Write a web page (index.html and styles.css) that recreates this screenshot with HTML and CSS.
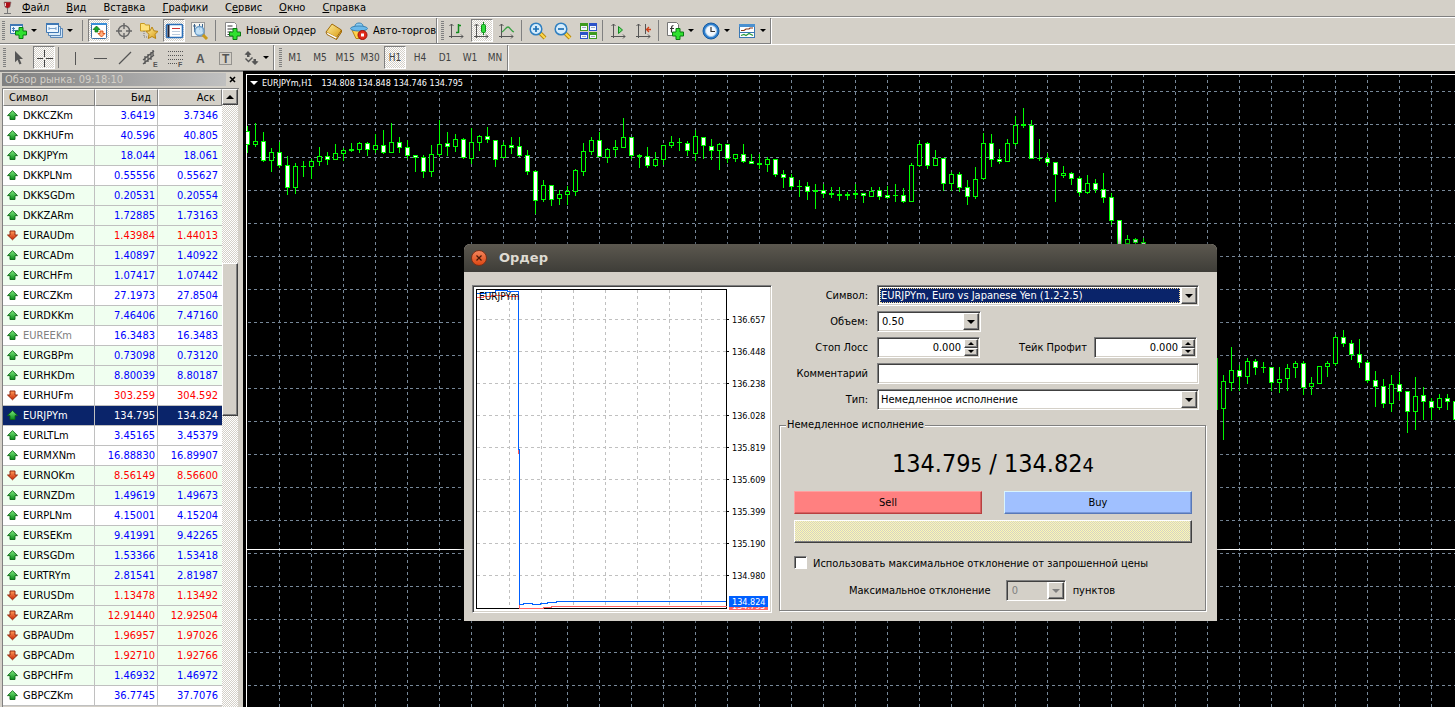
FILE: index.html
```
<!DOCTYPE html>
<html lang="ru">
<head>
<meta charset="utf-8">
<title>MetaTrader</title>
<link rel="stylesheet" href="styles.css">
</head>
<body>
<svg class="defs" aria-hidden="true">
  <defs>
    <linearGradient id="gGreen" x1="0" y1="0" x2="0" y2="1"><stop offset="0" stop-color="#7dea7d"/><stop offset="1" stop-color="#0a8a1a"/></linearGradient>
    <linearGradient id="gRed" x1="0" y1="0" x2="0" y2="1"><stop offset="0" stop-color="#ff9a5a"/><stop offset="1" stop-color="#c62a08"/></linearGradient>
    <linearGradient id="gGold" x1="0" y1="0" x2="1" y2="1"><stop offset="0" stop-color="#fff0a0"/><stop offset="1" stop-color="#d99a10"/></linearGradient>
    <symbol id="plus" viewBox="0 0 12 12"><path d="M4 .5h4V4h3.500v4H8v3.500H4V8H.5V4H4z" fill="#2fe02f" stroke="#0a7a12"/></symbol>
    <symbol id="up" viewBox="0 0 12 12"><path d="M5.500.7 10.500 5.600H8V9.500H3V5.600H.5z" fill="url(#gGreen)" stroke="#0b6a14" stroke-width=".9"/></symbol>
    <symbol id="down" viewBox="0 0 12 12"><path d="M5.500 9.800 10.500 5H8V1H3V5H.5z" fill="url(#gRed)" stroke="#8c1e06" stroke-width=".9"/></symbol>
    <symbol id="axes" viewBox="0 0 20 20"><path d="M4.500 3v14M2 15.500h14M2.500 5l2-2 2 2M14 13.500l2 2-2 2" fill="none" stroke="#555"/></symbol>
    <symbol id="lens" viewBox="0 0 20 20"><path d="M11 11l6 6" stroke="#b98a10" stroke-width="4"/><path d="M11 11l6 6" stroke="#ffd84a" stroke-width="2"/><circle cx="8" cy="8" r="5.800" fill="#d5ecfb" stroke="#2f7fc0" stroke-width="1.500"/></symbol>
  </defs>
</svg>
<div class="app">
  <nav class="menu">
    <svg class="logo" width="14" height="16" viewBox="0 0 14 16"><path d="M4 2h7l-1 5-2.500 1.500L5 7z" fill="#b01018" stroke="#777" stroke-width=".6"/><path d="M7.500 8v5M4 13.500h7" stroke="#777"/><path d="M5.500 3v3" stroke="#fff" stroke-width=".8"/></svg>
    <button><u>Ф</u>айл</button><button><u>В</u>ид</button><button>Вст<u>а</u>вка</button><button><u>Г</u>рафики</button><button>С<u>е</u>рвис</button><button><u>О</u>кно</button><button><u>С</u>правка</button>
  </nav>

  <div class="band">
    <div class="bar bar-main">
      <i class="grip"></i>
      <button class="tool wide" aria-label="Новый график"><svg width="20" height="20"><path d="M2.500 3.500h12v9h-12z" fill="#eaf5ff" stroke="#3f78b4"/><path d="M2 4h13" stroke="#3f78b4" stroke-width="2"/><path d="M5.500 6v5M4 7.500h3M4 9.500h6" stroke="#4a80b8"/><use href="#plus" x="7" y="6" width="12" height="12"/></svg><b class="arr"></b></button>
      <button class="tool wide" aria-label="Профили"><svg width="20" height="20"><path d="M6.500 7.500h12v9h-12z" fill="#cfe4f6" stroke="#5b88b8"/><path d="M4.500 5.500h12v9h-12z" fill="#dceefb" stroke="#5b88b8"/><path d="M2.500 2.500h12v9h-12z" fill="#eef7ff" stroke="#3f78b4"/><path d="M2 3h13" stroke="#3f78b4" stroke-width="2"/><path d="M5 7.500h7M5 6v3M12 6v3" stroke="#7aa3cc"/></svg><b class="arr"></b></button>
      <i class="sep"></i>
      <button class="tool on" aria-label="Обзор рынка"><svg width="20" height="20"><rect x="2.500" y="2.500" width="15" height="15" rx="1" fill="#fff" stroke="#3a6ea5"/><path d="M2 3h16" stroke="#3a8fd8" stroke-width="2"/><path d="M7.500 5l3.500 3.500H9V11H6V8.500H4z" fill="#18a828" stroke="#0b6a14" stroke-width=".7"/><path d="M12.500 16l3.500-3.500h-2V10h-3v2.500H9z" fill="#ffb080" stroke="#d8480a" stroke-width=".9"/></svg></button>
      <button class="tool" aria-label="Окно данных"><svg width="20" height="20"><circle cx="10" cy="10" r="5.500" fill="none" stroke="#666" stroke-width="1.400"/><path d="M10 2v6M10 12v6M2 10h6M12 10h6" stroke="#666" stroke-width="1.400"/></svg></button>
      <button class="tool" aria-label="Навигатор"><svg width="20" height="20"><path d="M1.500 2.500h4l1 1.500h4v6h-9z" fill="#ffe27a" stroke="#c69a22"/><path d="M5 10v6h4" stroke="#777" fill="none" stroke-dasharray="1 1"/><path d="M13 6l1.900 3.800 4.100.6-3 2.900.7 4.200-3.700-2-3.700 2 .7-4.200-3-2.900 4.100-.6z" fill="url(#gGold)" stroke="#b98512"/></svg></button>
      <button class="tool on" aria-label="Терминал"><svg width="20" height="20"><rect x="2.500" y="3.500" width="16" height="13" rx="1" fill="#fff" stroke="#2a6fb8" stroke-width="1.600"/><path d="M4.500 4v12" stroke="#223" stroke-width="2"/><path d="M8 7.500h8" stroke="#c33"/><path d="M8 10.500h8M8 13.500h8" stroke="#bcd"/></svg></button>
      <button class="tool" aria-label="Тестер стратегий"><svg width="20" height="20"><rect x="2.500" y="1.500" width="13" height="14" fill="#f4f4f0" stroke="#999"/><path d="M5.500 3v8M4 5h3M10.500 3v6M13.500 3v8" stroke="#3d648c"/><path d="M13 13l5 5" stroke="#c9991a" stroke-width="3"/><circle cx="10.500" cy="10" r="4.500" fill="#b9dcf6" fill-opacity=".85" stroke="#6a9cc8" stroke-width="1.300"/></svg></button>
      <i class="sep"></i>
      <button class="tool text"><svg width="20" height="20"><path d="M3.500 1.500h9l2 2v12h-11z" fill="#fff" stroke="#888"/><path d="M5.500 5h5M5.500 8h7M5.500 11h4M5.500 13.500h3" stroke="#333"/><use href="#plus" x="7" y="7" width="12" height="12"/></svg>Новый Ордер</button>
      <button class="tool" aria-label="MetaEditor"><svg width="20" height="20"><path d="M8 3l9.500 6-5 7.500L2 11z" fill="url(#gGold)" stroke="#a06a08"/><path d="M2 11l1 2.500 9.500 5 .5-2" fill="#fff" stroke="#a06a08"/><path d="M12.500 18.500l5-7.500V9" fill="#d08a10" stroke="#a06a08"/></svg></button>
      <button class="tool text"><svg width="20" height="20"><path d="M3 9h13l-3 8.500H7z" fill="#ffd24a" stroke="#b98512"/><path d="M6 5c0-4 8-4 8 0l.5 2.500h-9z" fill="#8ccdf2" stroke="#3b85b5"/><ellipse cx="10" cy="7.500" rx="8.500" ry="2.500" fill="#6bb9ea" stroke="#3b85b5"/><circle cx="13.500" cy="14" r="4.500" fill="#e02a18" stroke="#a01008"/><path d="M12 12.500h3v3h-3z" fill="#fff"/></svg>Авто-торговля</button>
    </div>
    <div class="bar bar-view">
      <i class="grip"></i>
      <button class="tool" aria-label="Бары"><svg width="20" height="20"><use href="#axes" width="20" height="20"/><path d="M11.500 3v9M11.500 4.500H14M9 11.500h2.500" stroke="#128a1c" stroke-width="1.500"/></svg></button>
      <button class="tool on" aria-label="Свечи"><svg width="20" height="20"><use href="#axes" width="20" height="20"/><path d="M11.500 1v13" stroke="#128a1c"/><rect x="9.500" y="3.500" width="4" height="8" rx="1" fill="#2fdd3a" stroke="#128a1c"/></svg></button>
      <button class="tool" aria-label="Линия"><svg width="20" height="20"><use href="#axes" width="20" height="20"/><path d="M5 11c3-2 4-5 6-5s3 4 6 5" fill="none" stroke="#3aa044" stroke-width="1.300"/></svg></button>
      <i class="sep"></i>
      <button class="tool" aria-label="Увеличить"><svg width="20" height="20"><use href="#lens" width="20" height="20"/><path d="M5 8h6M8 5v6" stroke="#1d6fb5" stroke-width="1.700"/></svg></button>
      <button class="tool" aria-label="Уменьшить"><svg width="20" height="20"><use href="#lens" width="20" height="20"/><path d="M5 8h6" stroke="#1d6fb5" stroke-width="1.700"/></svg></button>
      <button class="tool" aria-label="Окна"><svg width="20" height="20"><path d="M2 2h8v8H2zM11 11h8v7h-8z" fill="#3d9a1e"/><path d="M11 2h8v8h-8zM2 11h8v7H2z" fill="#2b52c8"/><path d="M3 5h6v4H3zM12 5h6v4h-6zM3 14h6v3H3zM12 14h6v3h-6z" fill="#f4f8ff"/><path d="M4 6.500h4M13 6.500h4M4 15.500h4M13 15.500h4" stroke="#9ab"/></svg></button>
      <i class="sep"></i>
      <button class="tool" aria-label="Автопрокрутка"><svg width="20" height="20"><use href="#axes" width="20" height="20"/><path d="M9.500 5.500l4 3.500-4 3.500z" fill="#6be072" stroke="#128a1c"/></svg></button>
      <button class="tool" aria-label="Сдвиг"><svg width="20" height="20"><use href="#axes" width="20" height="20"/><path d="M11.500 3v10" stroke="#555"/><path d="M17 8.500h-4M15 6l-2.500 2.500L15 11" fill="none" stroke="#d0401a" stroke-width="1.300"/></svg></button>
      <i class="sep"></i>
      <button class="tool wide" aria-label="Индикаторы"><svg width="20" height="20"><path d="M2.500 1.500h9l2 2v11h-11z" fill="#fff" stroke="#777"/><path d="M8.500 4.500c-2 0-2 1-2 7M5 7.500h4" fill="none" stroke="#333" stroke-width="1.200"/><use href="#plus" x="7" y="7" width="12" height="12"/></svg><b class="arr"></b></button>
      <button class="tool wide" aria-label="Периоды"><svg width="20" height="20"><circle cx="10" cy="10" r="8" fill="#2d7fd0" stroke="#175a9e"/><circle cx="10" cy="10" r="5.500" fill="#f2f8ff" stroke="#a8cbe8"/><path d="M10 6v4.500h4" fill="none" stroke="#333" stroke-width="1.200"/></svg><b class="arr"></b></button>
      <button class="tool wide" aria-label="Шаблоны"><svg width="20" height="20"><rect x="2.500" y="3.500" width="15" height="13" fill="#fff" stroke="#3a78b4"/><path d="M2 4.500h16" stroke="#4a90d0" stroke-width="3"/><path d="M4 9.500h3l2-1.500h3l1-1h3" fill="none" stroke="#8a3a1a" stroke-width="1.200"/><path d="M2 11.500h16" stroke="#3a78b4"/><path d="M4 14.500l3-1 2 1 3-2 4 2" fill="none" stroke="#2a9a3a" stroke-width="1.200"/></svg><b class="arr"></b></button>
    </div>
  </div>

  <div class="band">
    <div class="bar bar-draw">
      <i class="grip"></i>
      <button class="tool" aria-label="Курсор"><svg width="20" height="20"><path d="M6 3l8 8h-3.500l2 4.500-2 1-2-4.800-2.500 2.500z" fill="#555"/></svg></button>
      <button class="tool on" aria-label="Перекрестие"><svg width="20" height="20"><path d="M10.500 2v7M10.500 12v7M3 10.500h6M12 10.500h7" stroke="#444"/></svg></button>
      <i class="sep"></i>
      <button class="tool" aria-label="Вертикальная линия"><svg width="20" height="20"><path d="M10.500 4v13" stroke="#555"/></svg></button>
      <button class="tool" aria-label="Горизонтальная линия"><svg width="20" height="20"><path d="M4 10.500h13" stroke="#555"/></svg></button>
      <button class="tool" aria-label="Трендовая линия"><svg width="20" height="20"><path d="M4 16L16 4" stroke="#555" stroke-width="1.300"/></svg></button>
      <button class="tool" aria-label="Канал"><svg width="20" height="20"><path d="M3 12L14 3M3 16L14 7M5 8v8M8 6v8M11 4v8M13 2v6" stroke="#555" stroke-width="1.300"/><text x="13" y="19" class="glyph small">E</text></svg></button>
      <button class="tool" aria-label="Фибоначчи"><svg width="20" height="20"><path d="M3 3.500h15M3 7.500h15M3 11.500h15M3 15.500h9" stroke="#555" stroke-dasharray="1 1"/><text x="13" y="19" class="glyph small">F</text></svg></button>
      <button class="tool" aria-label="Текст"><svg width="20" height="20"><text x="6" y="15" class="glyph">A</text></svg></button>
      <button class="tool" aria-label="Метка"><svg width="20" height="20"><rect x="4.500" y="4.500" width="12" height="12" fill="none" stroke="#555" stroke-dasharray="1 1"/><text x="7" y="15" class="glyph">T</text></svg></button>
      <button class="tool wide" aria-label="Стрелки"><svg width="20" height="20"><path d="M8 3l3.500 3.500-2 .5v2H7V7l-2.500-.5zM15 17l-3.500-3.500 2-.5v-2H16v2l2.500.5zM6 10l2.500 2.500L12 9l1 1-4.500 4.500L5 11z" fill="#555"/></svg><b class="arr"></b></button>
    </div>
    <div class="bar bar-frames">
      <i class="grip"></i>
      <button class="tool tf">M1</button><button class="tool tf">M5</button><button class="tool tf">M15</button><button class="tool tf">M30</button><button class="tool tf on">H1</button><button class="tool tf">H4</button><button class="tool tf">D1</button><button class="tool tf">W1</button><button class="tool tf">MN</button>
    </div>
  </div>

  <main class="work">
    <aside class="watch">
      <header class="watch-title"><span>Обзор рынка: 09:18:10</span><button aria-label="Закрыть"><svg width="7" height="7"><path d="M1 1l5 5M6 1L1 6" stroke="#000" stroke-width="1.600"/></svg></button></header>
      <div class="watch-body">
        <table class="quotes">
          <colgroup><col class="c-sym"><col class="c-bid"><col></colgroup>
          <thead><tr><th>Символ</th><th>Бид</th><th>Аск</th></tr></thead>
          <tbody id="quotes"></tbody>
        </table>
        <div class="scroll"><button class="scroll-up" aria-label="Вверх"><b class="tri-up"></b></button><div class="thumb"></div></div>
      </div>
    </aside>

    <section class="chart">
      <svg id="chart" width="100%" height="100%" shape-rendering="crispEdges"></svg>
      <p class="chart-label"><b class="arr big"></b><span>EURJPYm,H1</span><span>134.808 134.848 134.746 134.795</span></p>
    </section>
  </main>
</div>

<div class="dialog" role="dialog" aria-labelledby="dlg">
  <header class="dialog-title"><button class="close" aria-label="Закрыть"><svg width="8" height="8"><path d="M1.500 1.500l5 5M6.500 1.500l-5 5" stroke="#4a1808" stroke-width="1.200"/></svg></button><h1 id="dlg">Ордер</h1></header>
  <form class="dialog-body">
    <svg class="ticks sunken" width="300" height="328" shape-rendering="crispEdges" id="ticks"></svg>
    <div class="side">
      <div class="fields">
        <label for="sym">Символ:</label>
        <span class="combo sunken sel"><select id="sym"><option>EURJPYm, Euro vs Japanese Yen (1.2-2.5)</option></select><span class="drop"><b class="arr big"></b></span></span>
        <label for="vol">Объем:</label>
        <span class="combo sunken short"><select id="vol"><option>0.50</option></select><span class="drop"><b class="arr big"></b></span></span>
        <label for="sl">Стоп Лосс</label>
        <div class="pair">
          <span class="spin sunken"><input id="sl" value="0.000"><span class="steps"><button type="button" aria-label="Больше"><b class="tri-up"></b></button><button type="button" aria-label="Меньше"><b class="arr"></b></button></span></span>
          <label for="tp">Тейк Профит</label>
          <span class="spin sunken"><input id="tp" value="0.000"><span class="steps"><button type="button" aria-label="Больше"><b class="tri-up"></b></button><button type="button" aria-label="Меньше"><b class="arr"></b></button></span></span>
        </div>
        <label for="com">Комментарий</label>
        <input id="com" class="line sunken">
        <label for="typ">Тип:</label>
        <span class="combo sunken"><select id="typ"><option>Немедленное исполнение</option></select><span class="drop"><b class="arr big"></b></span></span>
      </div>
      <fieldset class="group">
        <legend>Немедленное исполнение</legend>
        <p class="price">134.79<small>5</small> / 134.82<small>4</small></p>
        <div class="deal"><button type="button" class="sell">Sell</button><button type="button" class="buy">Buy</button></div>
        <button type="button" class="wait" aria-label="Статус"></button>
        <label class="check"><input type="checkbox"><span>Использовать максимальное отклонение от запрошенной цены</span></label>
        <div class="dev"><label for="dev">Максимальное отклонение</label><span class="combo sunken off"><select id="dev" disabled><option>0</option></select><span class="drop"><b class="arr big"></b></span></span><span>пунктов</span></div>
      </fieldset>
    </div>
  </form>
</div>
<script src="app.js"></script>
</body>
</html>
```
FILE: styles.css
```
* { box-sizing: border-box; }
html, body { height: 100%; }
body { margin: 0; overflow: hidden; background: #d4d0c8; color: #000; font: 11px/14px "DejaVu Sans Condensed", "DejaVu Sans", sans-serif; }
button, input, select { font: inherit; color: inherit; margin: 0; padding: 0; border: 0; background: none; border-radius: 0; }
h1, p { margin: 0; }
.defs { position: absolute; width: 0; height: 0; }
.app { display: flex; flex-direction: column; height: 100%; }

.menu { display: flex; align-items: center; height: 17px; border-bottom: 1px solid #808080; background: #d4d0c8; }
.menu button { padding: 0 9px 0 8px; white-space: nowrap; }
.menu u { text-underline-offset: 1px; }

.band { display: flex; height: 27px; border-top: 1px solid #fff; }
.bar { display: flex; align-items: center; height: 26px; border-right: 1px solid #808080; border-bottom: 1px solid #808080; box-shadow: 1px 1px 0 #fff; }
.bar-main { width: 437px; overflow: hidden; }
.bar-draw { width: 274px; padding-left: 1px; }
.bar-view { padding-left: 2px; }
.bar-frames { padding-left: 3px; }
.grip { flex: none; width: 3px; height: 20px; margin-left: 2px; background: repeating-linear-gradient(#808080 0 1px, #d4d0c8 1px 2px); }
.sep { flex: none; width: 1px; height: 21px; margin: 0 3px 0 2px; background: #808080; }
.bar-main .sep { margin-left: 4px; }
.bar-main .wide + .sep { margin-left: 5px; }
.tool { flex: none; display: flex; align-items: center; justify-content: center; width: 22px; height: 23px; margin: 0 1px 0 2px; border: 1px solid transparent; }
.tool svg { flex: none; }
.tool.wide { justify-content: flex-start; width: 33px; gap: 3px; }
.tool.text { width: auto; gap: 4px; padding-right: 3px; white-space: nowrap; }
.tool.on { border-color: #808080 #fff #fff #808080; background: repeating-conic-gradient(#fff 0 25%, #d4d0c8 0 50%) 0 0 / 2px 2px; }
.tool.tf { color: #404040; font: 10px/14px "DejaVu Sans Condensed", "DejaVu Sans", sans-serif; }
.glyph { font: bold 12px "Liberation Sans", sans-serif; fill: #555; }
.glyph.small { font-size: 7px; }
.arr { flex: none; width: 0; height: 0; border: 3px solid transparent; border-top-color: #000; border-bottom: 0; }
.arr.big { border-width: 4px 4px 0; }
.tri-up { width: 0; height: 0; border: 3px solid transparent; border-bottom-color: #000; border-top: 0; }

.work { flex: 1; display: flex; min-height: 0; }
.watch { flex: none; display: flex; flex-direction: column; width: 243px; padding: 0 4px 0 2px; border-top: 1px solid #808080; }
.watch-title { display: flex; align-items: center; height: 14px; margin-bottom: 2px; }
.watch-title span { flex: 1; height: 13px; padding-left: 3px; line-height: 13px; color: #d4d0c8; background: linear-gradient(90deg, #808080, #c0c0c0); }
.watch-title button { width: 13px; height: 13px; display: flex; align-items: center; justify-content: center; }
.watch-body { flex: 1; display: flex; min-height: 0; overflow: hidden; border-left: 1px solid #808080; border-top: 1px solid #808080; }
.quotes { width: 219px; height: max-content; table-layout: fixed; border-collapse: separate; border-spacing: 0; background: #fff; }
.c-sym { width: 92px; }
.c-bid { width: 63px; }
.quotes th { height: 17px; padding: 0 6px; font-weight: normal; text-align: right; background: #d4d0c8; border: 1px solid; border-color: #fff #808080 #808080 #fff; }
.quotes th:first-child { padding-left: 5px; text-align: left; }
.quotes td { height: 20px; padding: 0 2px; text-align: right; color: #00f; border-right: 1px solid #c0c0c0; border-bottom: 1px solid #c0c0c0; }
.quotes td:last-child { padding-right: 4px; border-right: 0; }
.quotes .sym { display: flex; align-items: center; gap: 4px; padding-left: 4px; color: #000; }
.quotes .green td { background: #f0fff0; }
.quotes .fall td + td { color: #f00; }
.quotes .dim .sym { color: #808080; }
.quotes tr.cur td, .quotes tr.cur .sym { background: #0a246a; color: #fff; }
.scroll { width: 16px; background: repeating-conic-gradient(#fff 0 25%, #d4d0c8 0 50%) 0 0 / 2px 2px; }
.scroll-up, .thumb, .drop, .steps button { border: 1px solid; border-color: #fff #404040 #404040 #fff; background: #d4d0c8; box-shadow: inset -1px -1px 0 #808080; }
.scroll-up { display: flex; align-items: center; justify-content: center; width: 16px; height: 16px; }
.scroll-up .tri-up { border-width: 0 4px 4px; }
.thumb { height: 153px; margin-top: 158px; }

.chart { flex: 1; position: relative; min-width: 0; overflow: hidden; background: #000; border: 2px solid #000; border-width: 3px 0 0 3px; }
.chart svg { display: block; }
.chart-label { position: absolute; left: 4px; top: 2px; display: flex; align-items: center; gap: 4px; color: #fff; font-size: 9px; white-space: nowrap; }
.chart-label .arr { border-top-color: #fff; }
.chart-label span { background: #000; }
.chart-label span + span { margin-left: 5px; }

.dialog { position: absolute; left: 464px; top: 244px; width: 753px; background: #d4d0c8; border-radius: 6px 6px 0 0; box-shadow: 0 0 10px rgba(0, 0, 0, .6); }
.dialog-title { display: flex; align-items: center; gap: 12px; height: 28px; padding-left: 7px; border-radius: 6px 6px 0 0; background: linear-gradient(#5c584f, #3e3d38); }
.dialog-title h1 { color: #dfdbd2; font: bold 13px/20px "DejaVu Sans", sans-serif; }
.close { display: flex; align-items: center; justify-content: center; width: 16px; height: 16px; border: 1px solid #7a3018; border-radius: 50%; background: linear-gradient(#f4835a, #dd4814); }
.dialog-body { display: flex; gap: 7px; padding: 13px 11px 8px 8px; }
.sunken { border: 1px solid; border-color: #808080 #fff #fff #808080; background: #fff; box-shadow: inset 1px 1px 0 #404040, inset -1px -1px 0 #d4d0c8; }
.ticks { flex: none; display: block; padding: 1px; }
.tick { font-size: 9px; }
.tick.name { font-size: 10px; }
.tick.tag { fill: #fff; }
.side { flex: 1; min-width: 0; }
.fields { display: grid; grid-template-columns: 89px 1fr; column-gap: 9px; row-gap: 5px; padding-right: 7px; }
.fields label { text-align: right; align-self: center; white-space: nowrap; }
.combo, .spin, .line { display: flex; height: 21px; }
.combo { padding: 1px; }
.combo select { flex: 1; min-width: 0; appearance: none; padding-left: 2px; opacity: 1; }
.combo.short { width: 104px; }
.combo.short select { padding-left: 3px; }
.combo.sel select { margin: 1px; padding-left: 1px; background: #0a246a; color: #fff; outline: 1px dotted #f5db95; outline-offset: -1px; }
.drop { display: flex; align-items: center; justify-content: center; width: 16px; }
.pair { display: flex; align-items: center; }
.spin { width: 103px; padding: 1px; }
.spin input { flex: 1; min-width: 0; padding-right: 3px; text-align: right; }
.pair label { width: 107px; margin-right: 7px; }
.steps { display: flex; flex-direction: column; width: 14px; background: #d4d0c8; }
.steps button { flex: 1; display: flex; align-items: center; justify-content: center; min-height: 0; }
.line { width: 100%; padding: 0 4px; }

.group { margin: 8px 0 0; padding: 0 13px 9px 14px; border: 1px solid #808080; box-shadow: 1px 1px 0 #fff, inset 1px 1px 0 #fff; min-width: 0; }
.group legend { margin-left: -8px; padding: 0 1px; background: #d4d0c8; }
.price { padding-top: 16px; text-align: center; font-size: 25px; line-height: 32px; white-space: nowrap; }
.price small { font-size: 20px; line-height: 20px; }
.deal { display: grid; grid-template-columns: 1fr 1fr; column-gap: 22px; margin: 11px 0 6px; }
.deal button { height: 23px; border: 1px solid; }
.deal .sell { background: #ff8080; border-color: #ffa0a0 #b84040 #b84040 #ffa0a0; box-shadow: inset -1px -1px 0 #d86060; }
.deal .buy { background: #a0c0ff; border-color: #d8f4ff #5878b8 #5878b8 #d8f4ff; box-shadow: inset -1px -1px 0 #7898d8; }
.wait { display: block; width: 100%; height: 23px; border: 1px solid; border-color: #fff #404040 #404040 #fff; box-shadow: inset -1px -1px 0 #808080; background: repeating-conic-gradient(#fffbb0 0 25%, #d4d0c8 0 50%) 0 0 / 2px 2px; }
.check { display: flex; gap: 6px; margin-top: 13px; align-items: flex-start; }
.check span { padding-top: 1px; white-space: nowrap; }
.check input { appearance: none; flex: none; width: 13px; height: 13px; background: #fff; border: 1px solid; border-color: #808080 #fff #fff #808080; box-shadow: inset 1px 1px 0 #404040; }
.dev { display: flex; align-items: center; gap: 7px; margin: 9px 0 0 55px; }
.dev label { margin-right: 8px; }
.combo.off { width: 60px; background: #d4d0c8; }
.combo.off select { padding-left: 4px; color: #808080; border-right: 1px solid #fff; }
.combo.off .arr { border-top-color: #808080; }
```
FILE: app.js
```
// Market watch: symbol, bid, ask, row classes
const quotes = [
  ['DKKCZKm', '3.6419', '3.7346', ''], ['DKKHUFm', '40.596', '40.805', ''], ['DKKJPYm', '18.044', '18.061', 'green'],
  ['DKKPLNm', '0.55556', '0.55627', ''], ['DKKSGDm', '0.20531', '0.20554', 'green'], ['DKKZARm', '1.72885', '1.73163', 'green'],
  ['EURAUDm', '1.43984', '1.44013', 'green fall'], ['EURCADm', '1.40897', '1.40922', 'green'], ['EURCHFm', '1.07417', '1.07442', 'green'],
  ['EURCZKm', '27.1973', '27.8504', ''], ['EURDKKm', '7.46406', '7.47160', 'green'], ['EUREEKm', '16.3483', '16.3483', 'dim'],
  ['EURGBPm', '0.73098', '0.73120', 'green'], ['EURHKDm', '8.80039', '8.80187', 'green'], ['EURHUFm', '303.259', '304.592', 'fall'],
  ['EURJPYm', '134.795', '134.824', 'cur'], ['EURLTLm', '3.45165', '3.45379', ''], ['EURMXNm', '16.88830', '16.89907', ''],
  ['EURNOKm', '8.56149', '8.56600', 'green fall'], ['EURNZDm', '1.49619', '1.49673', 'green'], ['EURPLNm', '4.15001', '4.15204', ''],
  ['EURSEKm', '9.41991', '9.42265', 'green'], ['EURSGDm', '1.53366', '1.53418', 'green'], ['EURTRYm', '2.81541', '2.81987', 'green'],
  ['EURUSDm', '1.13478', '1.13492', 'green fall'], ['EURZARm', '12.91440', '12.92504', 'green fall'], ['GBPAUDm', '1.96957', '1.97026', 'green fall'],
  ['GBPCADm', '1.92710', '1.92766', 'green fall'], ['GBPCHFm', '1.46932', '1.46972', 'green'], ['GBPCZKm', '36.7745', '37.7076', '']
];
document.getElementById('quotes').innerHTML = quotes.map(([s, b, a, c]) =>
  `<tr class="${c}"><td class="sym"><svg width="12" height="12"><use href="#${c.includes('fall') ? 'down' : 'up'}"/></svg>${s}</td><td>${b}</td><td>${a}</td></tr>`).join('');

// Candles: high, body top, body bottom, low, 1 = bearish (filled)
const candles = [
  [26,31,44,52,1],[23,41,44,46,0],[32,41,60,61,1],[48,52,60,71,0],[42,52,65,67,1],[56,65,87,94,1],[63,66,87,93,0],[61,66,66,76,0],
  [59,61,66,78,0],[47,56,61,65,0],[52,56,59,64,1],[44,53,59,59,0],[48,50,53,60,0],[43,49,50,51,1],[42,43,49,52,0],[42,43,49,55,1],
  [34,45,49,52,0],[30,45,52,53,1],[23,42,52,52,0],[37,42,47,52,1],[40,47,55,58,1],[55,55,57,71,1],[55,57,71,77,1],[45,54,71,76,0],
  [20,44,54,56,0],[32,43,46,55,1],[34,39,46,51,0],[38,39,57,58,1],[28,42,58,63,0],[35,36,42,50,0],[27,36,39,42,1],[40,40,59,66,1],
  [42,45,57,57,0],[37,45,47,53,1],[37,46,55,56,1],[50,55,71,74,1],[70,71,100,113,1],[80,85,99,101,0],[85,85,99,105,1],[90,94,98,104,0],
  [86,91,94,104,0],[69,70,91,95,0],[43,51,71,75,0],[37,40,51,54,0],[32,40,56,56,1],[48,49,57,62,0],[40,47,49,56,0],[18,37,47,47,0],
  [37,37,55,58,1],[54,55,56,67,1],[47,56,65,67,1],[52,59,65,66,0],[45,45,59,64,0],[36,42,45,47,0],[38,42,42,50,0],[41,43,50,55,1],
  [30,36,53,60,0],[37,37,45,58,1],[39,46,50,59,1],[43,44,50,69,0],[44,44,58,62,1],[54,54,58,61,0],[44,54,61,62,1],[54,61,63,63,1],
  [54,63,64,68,1],[57,59,64,71,0],[59,59,74,76,1],[70,74,77,87,1],[74,77,86,89,1],[80,86,86,96,0],[82,86,91,99,1],[84,90,91,108,1],
  [84,90,93,97,1],[87,93,94,97,1],[87,94,95,100,1],[92,94,95,99,1],[84,93,94,98,1],[93,93,95,102,1],[87,91,96,96,0],[87,90,96,99,1],
  [86,95,97,98,1],[84,95,95,101,0],[88,95,101,102,1],[63,65,101,101,0],[41,44,65,66,0],[42,43,65,68,1],[50,58,65,65,0],[58,58,83,90,1],
  [72,74,83,90,0],[72,74,87,91,1],[80,87,96,104,1],[67,79,96,98,0],[33,43,78,79,0],[34,43,59,66,1],[49,59,61,63,1],[39,43,61,61,0],
  [16,25,43,45,0],[8,24,25,27,1],[20,25,58,58,1],[39,58,58,60,0],[53,58,62,65,1],[62,62,74,101,1],[66,73,75,77,0],[72,73,78,84,1],
  [76,78,92,95,1],[75,83,92,93,0],[79,83,89,92,1],[73,89,97,102,1],[93,97,120,124,1],[120,120,150,150,1],[135,139,143,143,0],[138,139,142,143,1],
  [138,142,150,160,1],[150,160,180,190,1],[170,180,200,210,1],[190,200,225,230,1],[215,225,240,245,1],[230,240,260,270,1],[250,260,280,290,1],[270,280,300,310,1],
  [280,300,310,320,1],[258,258,309,309,0],[275,281,308,339,0],[247,270,282,290,0],[265,270,276,290,1],[258,261,276,283,0],[259,261,267,274,1],[262,267,267,272,0],
  [267,267,282,290,1],[267,279,282,292,0],[264,268,278,290,0],[261,263,267,277,0],[261,263,287,294,1],[277,283,286,294,0],[266,266,283,283,0],[261,263,266,276,0],
  [235,237,263,265,0],[230,237,243,246,1],[240,243,254,259,1],[239,254,262,267,1],[260,262,280,282,1],[271,280,286,306,1],[279,286,303,307,1],[275,284,303,311,0],
  [272,284,291,299,1],[291,291,311,332,1],[277,296,311,329,0],[287,295,301,319,1],[298,301,307,319,1],[294,298,307,309,0],[294,298,301,309,1],[301,301,319,319,1]
];
const chart = document.getElementById('chart');
const { width, height } = chart.getBoundingClientRect();
const LIME = '#00ff00', GRID = '#778899', TOP = 26;
const box = (x, y, w, h, fill) => `<rect x="${x}" y="${y}" width="${w}" height="${h}" fill="${fill}"/>`;
let out = '';
for (let x = 33; x < width; x += 32) out += `<path d="M${x}.5 0V${height}" stroke="${GRID}" stroke-dasharray="3 3"/>`;
for (let y = 17; y < height; y += 33) out += `<path d="M2 ${y}.5H${width}" stroke="${GRID}" stroke-dasharray="3 3"/>`;
out += box(0, 0, width, 1, '#fff') + box(0, 0, 1, height, '#fff') + box(0, 475, width, 1, '#fff');
candles.forEach(([h, t, b, l, fill], i) => {
  const x = 1 + i * 8, y = TOP + t;
  out += box(x, TOP + h, 1, l - h + 1, LIME) + box(x - 2, y, 5, b - t + 1, LIME);
  if (b - t > 1) out += box(x - 1, y + 1, 3, b - t - 1, fill ? '#fff' : '#000');
});
chart.innerHTML = out;

// Tick chart of the order window
const prices = ['136.657', '136.448', '136.238', '136.028', '135.819', '135.609', '135.399', '135.190', '134.980'];
let t = '';
for (let x = 35; x < 252; x += 32) t += `<path d="M${x}.5 3V321" stroke="#c0c0c0" stroke-dasharray="3 3"/>`;
prices.forEach((p, i) => {
  const y = 32 + i * 32;
  t += `<path d="M3 ${y}.5H252" stroke="#c0c0c0" stroke-dasharray="3 3"/><path d="M252 ${y}.5h3" stroke="#000"/><text x="258" y="${y + 4}" class="tick">${p}</text>`;
});
t += `<rect x="2.5" y="2.5" width="250" height="319" fill="none" stroke="#000"/>
<path d="M3 10.500h6v-1h8v-1h16v1h11M44.500 163v4M45.500 317v4.500h24v-1h8v-1h175" fill="none" stroke="#ff6060"/>
<path d="M3 6.500h8v-1h10v-2h12v1h11.500V162.500h1V317.500h4v-1h9v1h8v-1h7v-1h9v-1h169" fill="none" stroke="#0060ff"/>
<text x="5" y="13" class="tick name">EURJPYm</text>
<rect x="255" y="318" width="39" height="5" fill="#ff6060"/><text x="258" y="322" class="tick tag">134.795</text>
<rect x="255" y="309" width="39" height="11" fill="#0060ff"/><text x="258" y="318" class="tick tag">134.824</text>`;
document.getElementById('ticks').innerHTML = t;
```
